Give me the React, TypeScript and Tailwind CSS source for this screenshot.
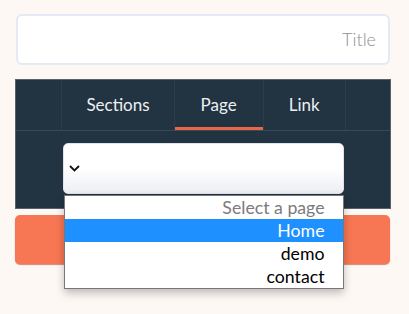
import React from "react";

export default function App() {
  return (
    <div className="min-h-[314px] w-[409px] bg-[#fef8f5] pt-[14px] font-['Lato',sans-serif]">
      <div className="ml-[16px] w-[374px] h-[51px] rounded-[6px] border-2 border-[#e4e9f4] bg-white flex items-center justify-end px-[12px]">
        <span className="text-[18px] font-light text-[#8f8f8f]">Title</span>
      </div>
      <div className="ml-[15px] mt-[14px] border border-[#56626c] bg-[#223342] w-[376px]">
        <div className="flex justify-center border-b border-[#3a4955]">
          <div className="flex h-[50px] ml-[1px]">
            <div className="flex items-center px-[24px] border-l border-[#2c3c4a] text-[17px] text-[#eef0f2]">Sections</div>
            <div className="relative flex items-center px-[26px] border-l border-[#2c3c4a] text-[17px] text-[#eef0f2]">
              Page
              <div className="absolute left-0 right-0 bottom-0 h-[3px] bg-[#e8664a]"></div>
            </div>
            <div className="flex items-center px-[25px] border-l border-r border-[#2c3c4a] text-[17px] text-[#eef0f2]">Link</div>
          </div>
        </div>
        <div className="flex justify-center pt-[12px] pb-[14px]">
          <div className="relative w-[281px]">
            <div className="h-[51px] rounded-[5px] border border-[#dfe3ea] bg-gradient-to-b from-white via-white to-[#eceef2] flex items-center px-[5px]">
              <svg width="11" height="7" viewBox="0 0 11 7">
                <path d="M1 1 L5.5 5.5 L10 1" fill="none" stroke="#111" strokeWidth="1.8" />
              </svg>
            </div>
            <div className="absolute left-[1px] top-[52px] z-10 w-[280px] border border-[#777] bg-white shadow-[0_4px_8px_rgba(0,0,0,0.25)] text-[17.7px] leading-[23px] text-right">
              <div className="px-[18px] text-[#7b7b7b]">Select a page</div>
              <div className="px-[18px] bg-[#1e90ff] text-white">Home</div>
              <div className="px-[18px] text-black">demo</div>
              <div className="px-[18px] text-black">contact</div>
            </div>
          </div>
        </div>
      </div>
      <div className="ml-[15px] mt-[6px] h-[49px] rounded-[5px] bg-[#f77653] shadow-[0_1px_1px_rgba(180,60,30,0.6)] w-[375px]"></div>
    </div>
  );
}
